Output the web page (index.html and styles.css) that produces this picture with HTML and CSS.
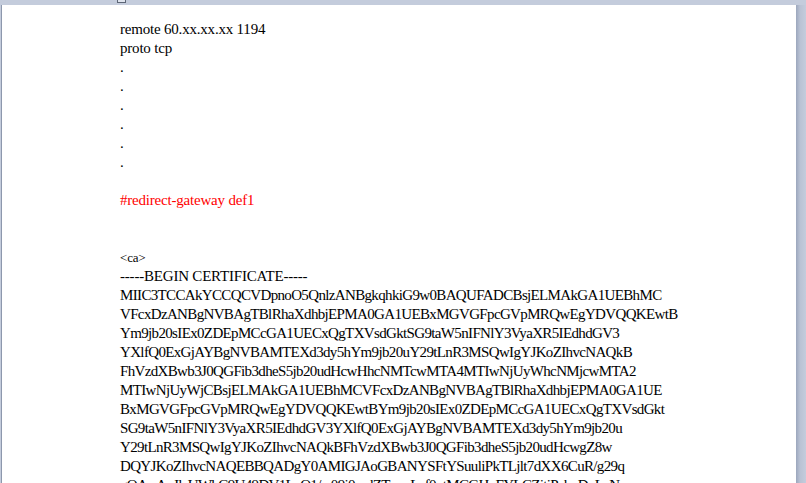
FILE: index.html
```html
<!DOCTYPE html>
<html lang="en">
<head>
    <meta charset="UTF-8">
    <title>client.ovpn - Document</title>
    <link rel="stylesheet" href="styles.css">
</head>
<body>
    <!-- ruler strip above the page -->
    <div class="ruler">
        <span class="indent-marker"></span>
    </div>

    <div class="workspace">
        <div class="edge-left"></div>

        <div class="page">
            <div class="line">remote 60.xx.xx.xx 1194</div>
            <div class="line">proto tcp</div>
            <div class="line">.</div>
            <div class="line">.</div>
            <div class="line">.</div>
            <div class="line">.</div>
            <div class="line">.</div>
            <div class="line">.</div>
            <div class="line"></div>
            <div class="line red">#redirect-gateway def1</div>
            <div class="line"></div>
            <div class="line"></div>
            <div class="line small">&lt;ca&gt;</div>
            <div class="line">-----BEGIN CERTIFICATE-----</div>
            <div class="line cert">MIIC3TCCAkYCCQCVDpnoO5QnlzANBgkqhkiG9w0BAQUFADCBsjELMAkGA1UEBhMC</div>
            <div class="line cert">VFcxDzANBgNVBAgTBlRhaXdhbjEPMA0GA1UEBxMGVGFpcGVpMRQwEgYDVQQKEwtB</div>
            <div class="line cert">Ym9jb20sIEx0ZDEpMCcGA1UECxQgTXVsdGktSG9taW5nIFNlY3VyaXR5IEdhdGV3</div>
            <div class="line cert">YXlfQ0ExGjAYBgNVBAMTEXd3dy5hYm9jb20uY29tLnR3MSQwIgYJKoZIhvcNAQkB</div>
            <div class="line cert">FhVzdXBwb3J0QGFib3dheS5jb20udHcwHhcNMTcwMTA4MTIwNjUyWhcNMjcwMTA2</div>
            <div class="line cert">MTIwNjUyWjCBsjELMAkGA1UEBhMCVFcxDzANBgNVBAgTBlRhaXdhbjEPMA0GA1UE</div>
            <div class="line cert">BxMGVGFpcGVpMRQwEgYDVQQKEwtBYm9jb20sIEx0ZDEpMCcGA1UECxQgTXVsdGkt</div>
            <div class="line cert">SG9taW5nIFNlY3VyaXR5IEdhdGV3YXlfQ0ExGjAYBgNVBAMTEXd3dy5hYm9jb20u</div>
            <div class="line cert">Y29tLnR3MSQwIgYJKoZIhvcNAQkBFhVzdXBwb3J0QGFib3dheS5jb20udHcwgZ8w</div>
            <div class="line cert">DQYJKoZIhvcNAQEBBQADgY0AMIGJAoGBANYSFtYSuuliPkTLjlt7dXX6CuR/g29q</div>
            <div class="line cert">gQAwAoJleUWbC9U49DV1LzQ1/w09i0mdZTwsaLzf0xtMCGHoFYLCZjtiPzboDuLzN</div>
        </div>

        <div class="edge-right"></div>
    </div>
</body>
</html>
```

FILE: styles.css
```css
body {
    margin: 0;
    background-color: #c4ccdc;
    height: 483px;
    overflow: hidden;
    font-family: "Liberation Serif", "Noto Sans CJK TC", serif;
}
.ruler {
    height: 5px;
    position: relative;
}
.indent-marker {
    position: absolute;
    left: 117px;
    top: -4px;
    width: 7px;
    height: 6px;
    background-color: #dfe4ee;
    border: 1px solid #5d6676;
    border-top: none;
}
.workspace {
    display: flex;
    height: 478px;
}
.edge-left {
    width: 1px;
    margin-left: 1px;
    background-color: #8d98ad;
}
.page {
    flex: 1;
    background-color: #fff;
    padding: 15px 0 0 118px;
    overflow: hidden;
    color: #000;
    font-size: 15px;
    letter-spacing: -0.2px;
}
.edge-right {
    width: 10px;
    background: linear-gradient(to right, #9ca7bd, #b9c2d4 40%, #c4ccdc);
}
.line {
    height: 19px;
    line-height: 19px;
    white-space: nowrap;
}
.red {
    color: #ff0000;
}
.small {
    font-size: 13px;
}
.cert {
    letter-spacing: -0.65px;
}
```
